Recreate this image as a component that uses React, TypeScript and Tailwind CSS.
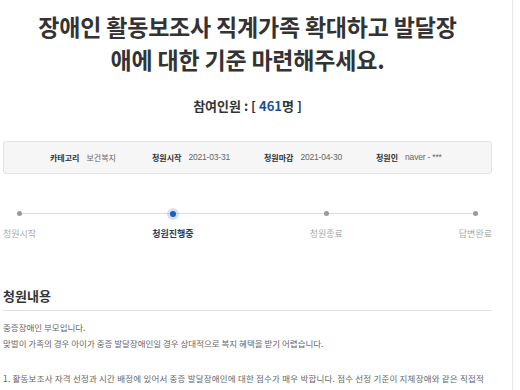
export default function App() {
  const steps = [
    { label: '청원시작', active: false },
    { label: '청원진행중', active: true },
    { label: '청원종료', active: false },
    { label: '답변완료', active: false },
  ]

  const info = [
    { label: '카테고리', value: '보건복지', w: 'w-[102px]', latin: false },
    { label: '청원시작', value: '2021-03-31', w: 'w-[112px]', latin: true },
    { label: '청원마감', value: '2021-04-30', w: 'w-[112px]', latin: true },
    { label: '청원인', value: 'naver - ***', w: 'w-[100px]', latin: true },
  ]

  return (
    <div
      className="flex h-[390px] w-[520px] overflow-hidden bg-white"
      style={{ fontFamily: '"Noto Sans CJK KR", "Noto Sans", sans-serif' }}
    >
      <div className="w-[513px] shrink-0 border-r border-[#e6e6e6]">
        <div className="ml-[3px] w-[489px]">
          <h1 className="pt-[10px] text-center text-[23px] font-bold leading-[33px] tracking-[-0.2px] text-[#333]">
            장애인 활동보조사 직계가족 확대하고 발달장
            <br />
            애에 대한 기준 마련해주세요.
          </h1>

          <p className="mt-[20px] text-center text-[13px] font-bold leading-[20px] text-[#333]">
            참여인원 : [ <span className="text-[#1b4f9c]">461</span>명 ]
          </p>

          <div className="mt-[25px] flex h-[33px] items-center whitespace-nowrap rounded-[3px] border border-[#e3e3e3] bg-[#f6f6f6] pl-[46px]">
            {info.map((it) => (
              <div key={it.label} className={`flex items-center gap-[7px] ${it.w}`}>
                <span className="text-[8px] font-bold text-[#333]">{it.label}</span>
                {it.latin ? (
                  <span
                    className="text-[8.5px] tracking-[-0.2px] text-[#666]"
                    style={{ fontFamily: '"Liberation Sans", sans-serif' }}
                  >
                    {it.value}
                  </span>
                ) : (
                  <span className="text-[8px] text-[#666]">{it.value}</span>
                )}
              </div>
            ))}
          </div>

          <div className="relative mt-[34px] flex justify-between">
            <div className="absolute left-[16px] right-[16px] top-[5px] h-px bg-[#dcdcdc]" />
            {steps.map((s) => (
              <div key={s.label} className="relative flex flex-col items-center">
                <div className="flex h-[11px] items-center justify-center">
                  {s.active ? (
                    <span className="h-[6px] w-[6px] rounded-full bg-[#1a5fc4] shadow-[0_0_0_3px_rgba(26,95,196,0.18)]" />
                  ) : (
                    <span className="h-[5px] w-[5px] rounded-full bg-[#9a9a9a]" />
                  )}
                </div>
                <span
                  className={
                    s.active
                      ? 'mt-[8px] text-[9px] font-bold leading-[14px] text-[#2b3e5c]'
                      : 'mt-[8px] text-[9px] leading-[14px] text-[#aaa]'
                  }
                >
                  {s.label}
                </span>
              </div>
            ))}
          </div>

          <h2 className="mt-[45px] text-[13px] font-bold leading-[20px] text-[#333]">청원내용</h2>
          <div className="mt-[4px] h-px bg-[#e2e2e2]" />

          <div className="mt-[8px] whitespace-nowrap text-[8.5px] leading-[16px] text-[#666]">
            <p>중증장애인 부모입니다.</p>
            <p>맞벌이 가족의 경우 아이가 중증 발달장애인일 경우 상대적으로 복지 혜택을 받기 어렵습니다.</p>
            <p className="mt-[19px] tracking-[0.2px]">
              1. 활동보조사 자격 선정과 시간 배정에 있어서 중증 발달장애인에 대한 점수가 매우 박합니다. 점수 선정 기준이 지체장애와 같은 직접적
            </p>
          </div>
        </div>
      </div>
    </div>
  )
}
